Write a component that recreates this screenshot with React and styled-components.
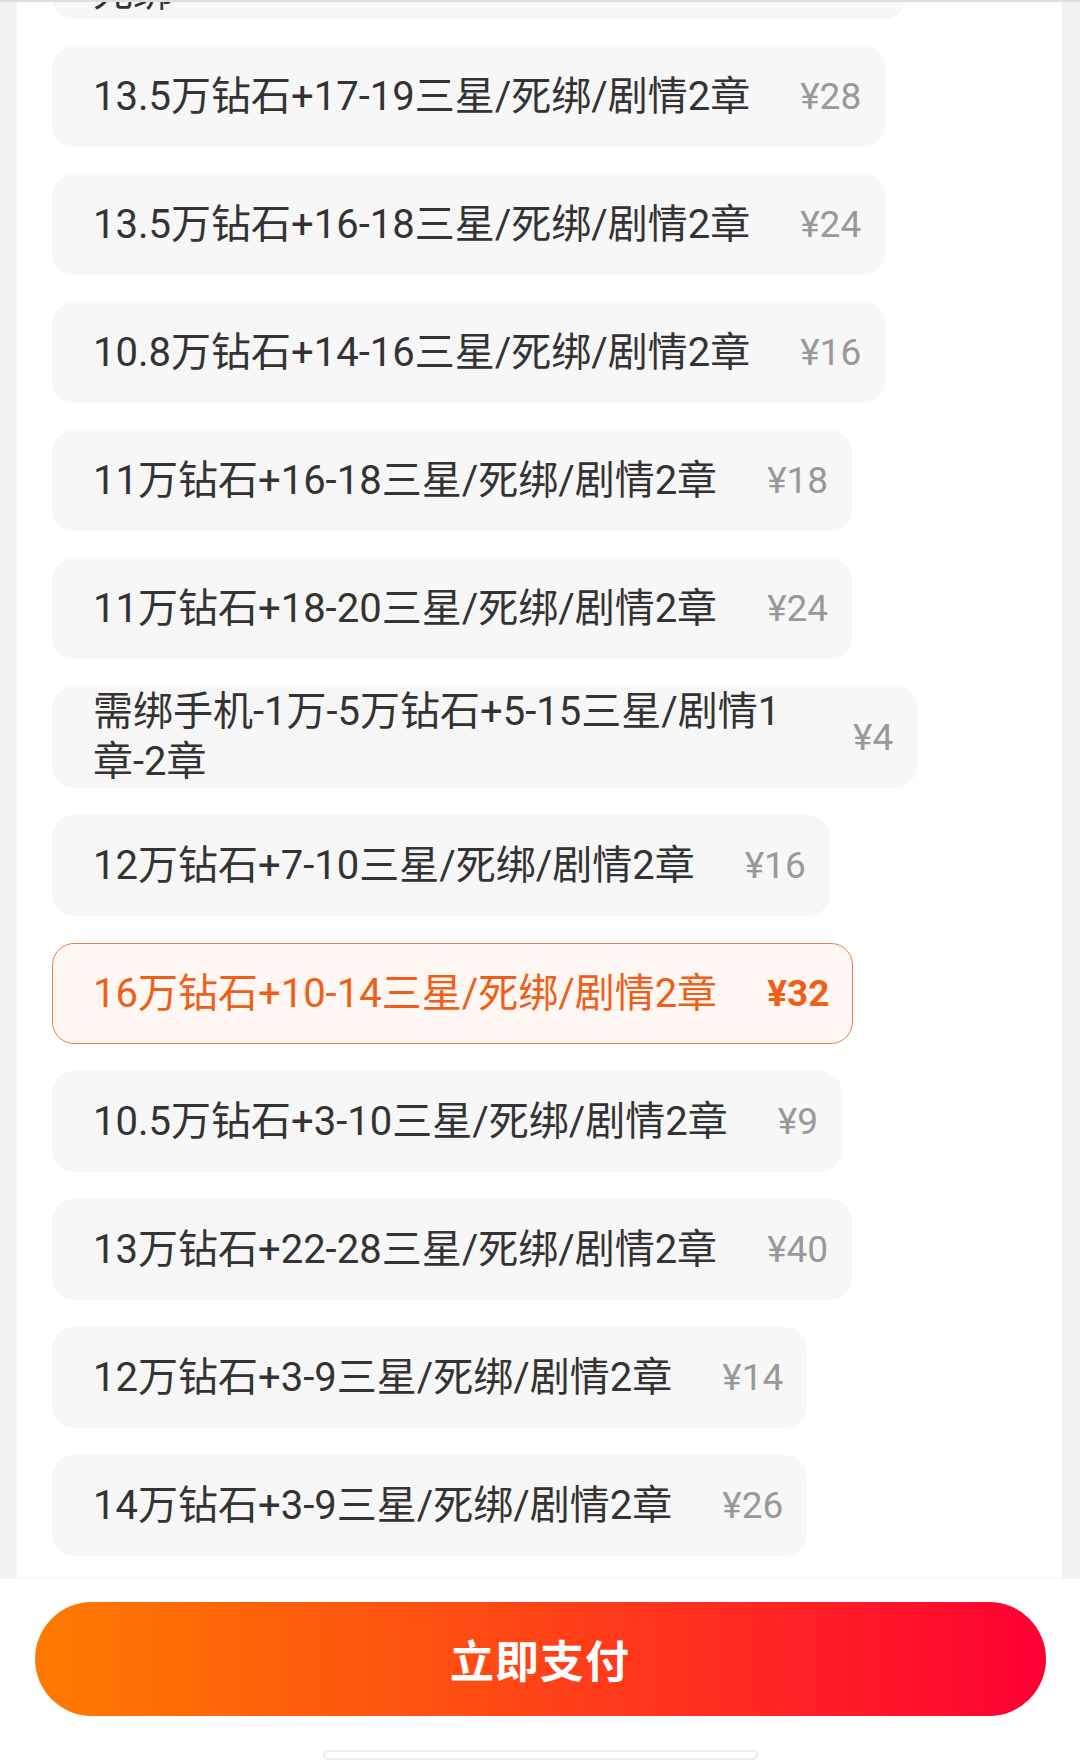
import styled, { createGlobalStyle } from "styled-components";

const packages = [
  { id: 0, lines: ["需绑手机-16万钻石+20-24三星/剧情2章", "死绑"], price: 6 },
  { id: 1, lines: ["13.5万钻石+17-19三星/死绑/剧情2章"], price: 28 },
  { id: 2, lines: ["13.5万钻石+16-18三星/死绑/剧情2章"], price: 24 },
  { id: 3, lines: ["10.8万钻石+14-16三星/死绑/剧情2章"], price: 16 },
  { id: 4, lines: ["11万钻石+16-18三星/死绑/剧情2章"], price: 18 },
  { id: 5, lines: ["11万钻石+18-20三星/死绑/剧情2章"], price: 24 },
  { id: 6, lines: ["需绑手机-1万-5万钻石+5-15三星/剧情1章-2章"], price: 4 },
  { id: 7, lines: ["12万钻石+7-10三星/死绑/剧情2章"], price: 16 },
  { id: 8, lines: ["16万钻石+10-14三星/死绑/剧情2章"], price: 32 },
  { id: 9, lines: ["10.5万钻石+3-10三星/死绑/剧情2章"], price: 9 },
  { id: 10, lines: ["13万钻石+22-28三星/死绑/剧情2章"], price: 40 },
  { id: 11, lines: ["12万钻石+3-9三星/死绑/剧情2章"], price: 14 },
  { id: 12, lines: ["14万钻石+3-9三星/死绑/剧情2章"], price: 26 },
];

const App = () => {
  const selected = 8;

  return (
    <>
      <GlobalStyle />
      <Page>
        <Panel>
          {/* list is scrolled: the first option is partly hidden above */}
          <List>
            {packages.map(item => (
              <Option key={item.id} $active={item.id === selected}>
                <Label>
                  {item.lines.map((line, i) => (
                    <span key={i}>
                      {i > 0 && <br />}
                      {line}
                    </span>
                  ))}
                </Label>
                <Price $active={item.id === selected}>¥{item.price}</Price>
              </Option>
            ))}
          </List>
        </Panel>
        <Footer>
          <PayButton type="button">立即支付</PayButton>
          <HomeBar />
        </Footer>
      </Page>
    </>
  );
};

export default App;

/* ---------------------------- Styled Components --------------------------- */

const GlobalStyle = createGlobalStyle`
  * {
    box-sizing: border-box;
  }
  html, body {
    margin: 0;
    padding: 0;
    background: #f2f2f2;
  }
  body {
    font-family: Roboto, "Noto Sans CJK SC", "Noto Sans", sans-serif;
  }
`;

const Page = styled.div`
  width: 1080px;
  height: 1762px;
  display: flex;
  flex-direction: column;
  border-top: 2px solid #dedede;
  background: #f2f2f2;
  overflow: hidden;
`;

const Panel = styled.div`
  height: 1577px;
  margin: 0 18px 0 17px;
  background: #fff;
  overflow: hidden;
  border-bottom: 1px solid #f4f4f4;
`;

const List = styled.div`
  display: flex;
  flex-direction: column;
  align-items: flex-start;
  gap: 27px;
  margin-top: -85px;
  padding-left: 35px;
`;

const Option = styled.div`
  display: inline-flex;
  align-items: center;
  gap: 50px;
  min-height: 101px;
  padding: 0 23px 0 40px;
  border-radius: 22px;
  background: ${p => (p.$active ? "#fff7f3" : "#f7f7f7")};
  border: 1.5px solid ${p => (p.$active ? "#e8804a" : "transparent")};
  color: ${p => (p.$active ? "#ef5f1a" : "#333")};
`;

const Label = styled.div`
  max-width: 710px;
  font-size: 40px;
  line-height: 50px;
`;

const Price = styled.div`
  flex-shrink: 0;
  font-size: 37px;
  font-weight: ${p => (p.$active ? 700 : 400)};
  color: ${p => (p.$active ? "#ef5f1a" : "#999")};
`;

const Footer = styled.div`
  flex: 1;
  background: #fff;
  display: flex;
  flex-direction: column;
  align-items: center;
  padding-top: 23px;
`;

const PayButton = styled.button`
  width: 1011px;
  height: 114px;
  border: none;
  border-radius: 57px;
  background: linear-gradient(90deg, #ff7a00 0%, #ff4a14 45%, #ff0033 100%);
  color: #fff;
  font-family: "Noto Sans CJK SC", sans-serif;
  font-size: 44px;
  font-weight: 700;
  letter-spacing: 1px;
  cursor: pointer;
`;

const HomeBar = styled.div`
  width: 435px;
  height: 10px;
  margin-top: 34px;
  border: 2px solid #ececec;
  border-radius: 5px;
  background: #fff;
`;
